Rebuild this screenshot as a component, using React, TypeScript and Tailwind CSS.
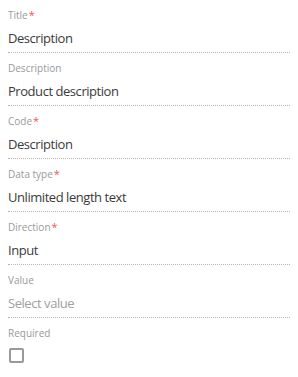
import React from "react";

type F = { label: string; required?: boolean; value: string; placeholder?: boolean };

const fields: F[] = [
  { label: "Title", required: true, value: "Description" },
  { label: "Description", value: "Product description" },
  { label: "Code", required: true, value: "Description" },
  { label: "Data type", required: true, value: "Unlimited length text" },
  { label: "Direction", required: true, value: "Input" },
  { label: "Value", value: "Select value", placeholder: true },
];

export default function App() {
  return (
    <div
      className="w-[298px] h-[377px] bg-white px-2"
      style={{ fontFamily: '"Open Sans", "Noto Sans", sans-serif' }}
    >
      {fields.map((f) => (
        <div key={f.label} className="h-[53px] flex flex-col border-b border-dotted border-[#b5b5b5]">
          <div className="mt-[7px] h-[16px] leading-[16px] text-[10px] text-[#999]">
            {f.label}
            {f.required && <span className="text-[#f25555] ml-[1px] text-[11px]">*</span>}
          </div>
          <div
            className={
              "mt-[5px] h-[20px] leading-[20px] text-[13px] tracking-[-0.45px] " +
              (f.placeholder ? "text-[#a0a0a0]" : "text-[#3a3a3a]")
            }
          >
            {f.value}
          </div>
        </div>
      ))}
      <div className="flex flex-col">
        <div className="mt-[7px] h-[16px] leading-[16px] text-[10px] text-[#999]">Required</div>
        <div className="mt-[7px] ml-[1px] w-[15px] h-[15px] border-2 border-[#999] rounded-[2px]" />
      </div>
    </div>
  );
}
